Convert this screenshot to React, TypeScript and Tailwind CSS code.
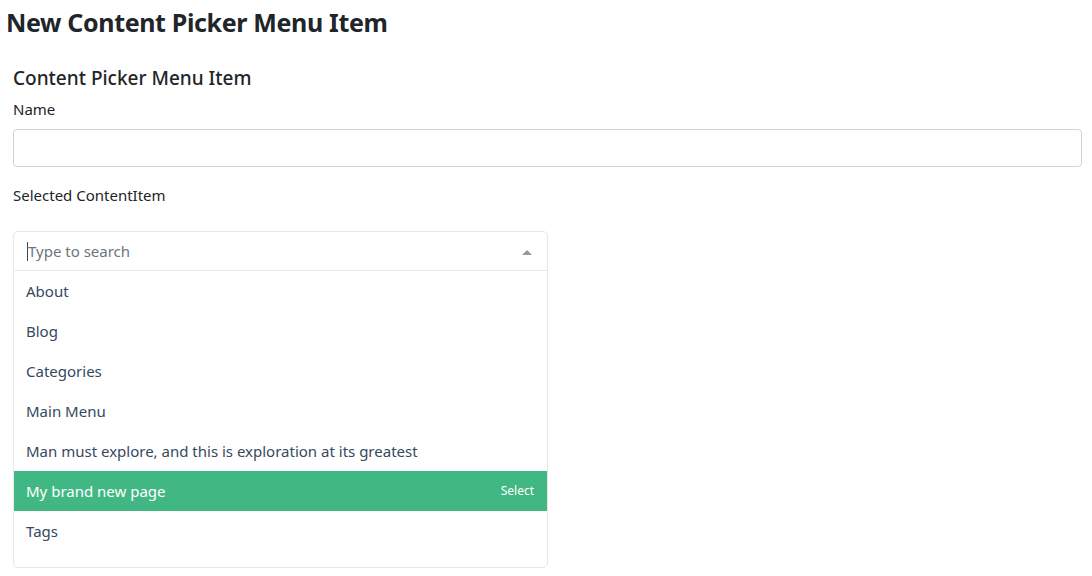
const items = [
  "About",
  "Blog",
  "Categories",
  "Main Menu",
  "Man must explore, and this is exploration at its greatest",
  "My brand new page",
  "Tags",
];

export default function App() {
  const highlighted = "My brand new page";

  return (
    <div className="min-h-screen bg-white text-[#212529] font-['Noto_Sans',sans-serif]">
      <h1 className="pl-[6px] pt-[4px] text-[25px] font-bold leading-[36px] tracking-[-0.35px]">
        New Content Picker Menu Item
      </h1>

      <div className="px-[13px] pt-[26px]">
        <h5 className="text-[19px] font-medium leading-[24px]">Content Picker Menu Item</h5>

        <label className="mt-[7px] block text-[15px] leading-[24px]">Name</label>
        <input
          type="text"
          className="mt-[8px] block h-[38px] w-[1069px] rounded border border-[#ced4da] px-3 outline-none"
        />

        <label className="mt-[16px] block text-[15px] leading-[24px]">Selected ContentItem</label>

        <div className="mt-[24px] w-[535px] rounded-[5px] border border-[#e8e8e8] bg-white text-[15px]">
          <div className="relative flex h-[39px] items-center border-b border-[#e8e8e8] pl-[13px]">
            <span className="h-[19px] w-px bg-[#35495e]" />
            <span className="text-[#6c757d]">Type to search</span>
            <span className="absolute right-[15px] top-[18px] h-0 w-0 border-x-[5px] border-b-[5px] border-x-transparent border-b-[#999]" />
          </div>
          <ul className="pb-[16px]">
            {items.map((item) => (
              <li
                key={item}
                className={`flex h-[40px] items-center justify-between px-[12px] ${
                  item === highlighted ? "bg-[#41b883] text-white" : "text-[#35495e]"
                }`}
              >
                <span>{item}</span>
                {item === highlighted && <span className="pr-[1px] text-[12px]">Select</span>}
              </li>
            ))}
          </ul>
        </div>
      </div>
    </div>
  );
}
